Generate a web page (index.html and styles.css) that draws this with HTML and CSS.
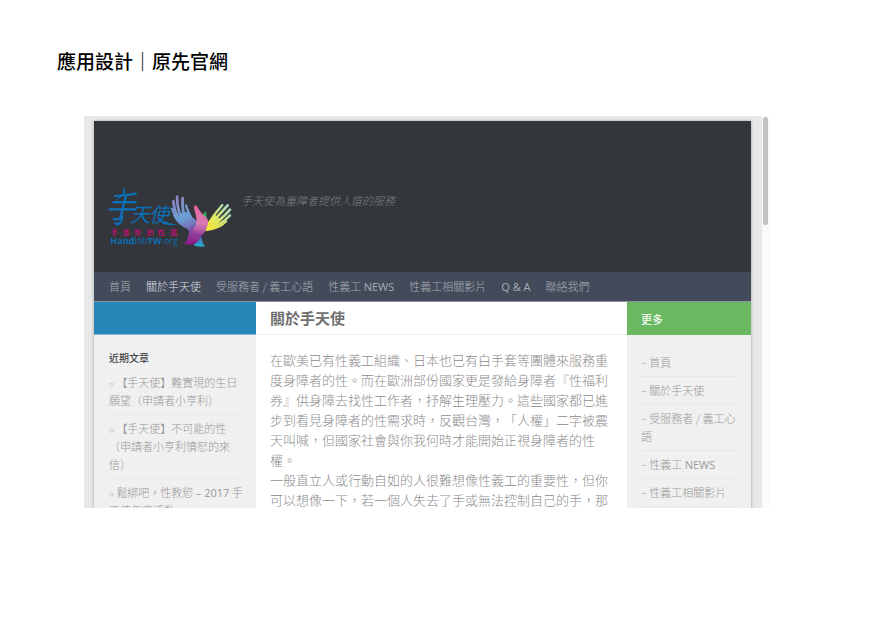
FILE: index.html
```html
<!DOCTYPE html>
<html lang="zh-Hant">
<head>
<meta charset="utf-8">
<meta name="viewport" content="width=device-width, initial-scale=1">
<title>應用設計｜原先官網</title>
<link rel="stylesheet" href="styles.css">
</head>
<body>
<h1 class="slide-title">應用設計｜原先官網</h1>
<div class="browser">
  <div class="backdrop">
    <div class="site">
      <header class="site-header">
        <a class="logo" href="#" aria-label="手天使">
          <svg class="logo-art" viewBox="87 48 366 186">
            <defs>
              <linearGradient id="wingL" gradientUnits="userSpaceOnUse" x1="290" y1="80" x2="345" y2="215">
                <stop offset="0" stop-color="#8f86c6"/><stop offset=".45" stop-color="#6a9fd4"/><stop offset=".75" stop-color="#7a62ae"/><stop offset="1" stop-color="#8c2a8c"/>
              </linearGradient>
              <linearGradient id="wingR" gradientUnits="userSpaceOnUse" x1="385" y1="165" x2="450" y2="120">
                <stop offset="0" stop-color="#f0e63c"/><stop offset=".45" stop-color="#dbe96a"/><stop offset="1" stop-color="#a5d8c4"/>
              </linearGradient>
              <linearGradient id="palm" gradientUnits="userSpaceOnUse" x1="355" y1="105" x2="345" y2="225">
                <stop offset="0" stop-color="#e8609c"/><stop offset=".45" stop-color="#d77bb2"/><stop offset=".75" stop-color="#9c3f9c"/><stop offset="1" stop-color="#86187f"/>
              </linearGradient>
              <linearGradient id="tail" x1="0" y1="0" x2="0" y2="1">
                <stop offset="0" stop-color="#5a5bb0"/><stop offset="1" stop-color="#20b4d2"/>
              </linearGradient>
            </defs>
            <g class="logo-name">
              <text class="name-big" x="76" y="144">手</text>
              <text class="name-mid" x="151" y="155">天</text>
              <text class="name-mid" x="208" y="155">使</text>
            </g>
            <path d="M128 52Q140 60 134 72Q118 86 106 92Q122 76 130 70Q132 62 128 52Z" fill="#0c6fb8"/>
            <path d="M128 130Q136 156 112 168Q104 164 100 156Q112 162 120 154Q126 146 128 130Z" fill="#0c6fb8"/>
            <path d="M232 146Q262 163 294 162Q272 169 250 162Z" fill="#0c6fb8"/>
            <text class="logo-motto" x="93 128 163 200 233 271" y="195">手護你的性福</text>
            <text class="logo-url" x="91" y="221"><tspan class="strong">Hand</tspan>Job<tspan class="strong">TW</tspan>.org</text>
            <path d="M366 134L378 124L380 145L372 158Z" fill="#35a965"/>
            <g fill="none" stroke="url(#wingR)" stroke-linecap="round">
              <path d="M382 166Q400 135 427 105" stroke-width="7"/>
              <path d="M382 170Q412 142 443 106" stroke-width="8"/>
              <path d="M382 174Q420 155 450 119" stroke-width="8"/>
              <path d="M382 178Q420 168 450 136" stroke-width="7"/>
              <path d="M380 180Q416 177 439 154" stroke-width="6"/>
            </g>
            <path d="M376 184Q380 155 405 134L424 151Q400 178 376 184Z" fill="url(#wingR)"/>
            <g fill="none" stroke="url(#wingL)" stroke-linecap="round">
              <path d="M330 165Q304 140 308 84" stroke-width="8"/>
              <path d="M322 165Q291 137 291 80" stroke-width="8"/>
              <path d="M322 168Q284 145 280 93" stroke-width="8"/>
              <path d="M325 170Q287 157 277 117" stroke-width="7"/>
              <path d="M325 174Q297 165 283 136" stroke-width="7"/>
              <path d="M346 160Q327 138 318 106" stroke-width="7"/>
            </g>
            <path d="M297 135Q304 125 320 126Q342 148 358 158L364 198L326 204Q333 184 319 174Q306 166 297 135Z" fill="url(#wingL)"/>
            <path d="M340 226Q356 213 364 197Q366 220 376 229Q357 233 340 226Z" fill="url(#tail)"/>
            <path d="M344 106Q350 105 357 119Q369 136 380 143Q386 149 383 164Q378 184 363 198Q354 220 334 225Q320 226 309 220Q322 216 325 197Q333 178 348 168Q352 146 344 122Q340 110 344 106Z" fill="url(#palm)"/>
            <path d="M344 160Q334 186 356 190Q368 192 360 201Q342 200 325 204Q322 176 344 160Z" fill="#6f329a" opacity=".35"/>
          </svg>
        </a>
        <p class="tagline">手天使為重障者提供人道的服務</p>
      </header>
      <nav class="site-nav">
        <a href="#">首頁</a>
        <a class="current" href="#">關於手天使</a>
        <a href="#">受服務者 / 義工心語</a>
        <a href="#">性義工 <span class="latin">NEWS</span></a>
        <a href="#">性義工相關影片</a>
        <a href="#"><span class="latin">Q &amp; A</span></a>
        <a href="#">聯絡我們</a>
      </nav>
      <div class="columns">
        <aside class="side">
          <div class="bar bar-blue"></div>
          <div class="side-body recent">
            <h3>近期文章</h3>
            <ul>
              <li><a href="#">【手天使】難實現的生日願望（申請者小亨利）</a></li>
              <li><a href="#">【手天使】不可能的性（申請者小亨利憤怒的來信）</a></li>
              <li><a href="#">鬆綁吧，性教慾 <span class="latin">– 2017</span> 手天使年度活動</a></li>
            </ul>
          </div>
        </aside>
        <main class="content">
          <div class="bar bar-title"><h2>關於手天使</h2></div>
          <div class="article">
            <p>在歐美已有性義工組織、日本也已有白手套等團體來服務重度身障者的性。而在歐洲部份國家更是發給身障者『性福利券』供身障去找性工作者，抒解生理壓力。這些國家都已進步到看見身障者的性需求時，反觀台灣，「人權」二字被震天叫喊，但國家社會與你我何時才能開始正視身障者的性權。</p>
            <p>一般直立人或行動自如的人很難想像性義工的重要性，但你可以想像一下，若一個人失去了手或無法控制自己的手，那</p>
          </div>
        </main>
        <aside class="side">
          <div class="bar bar-green"><h2>更多</h2></div>
          <div class="side-body more">
            <ul>
              <li><a href="#">首頁</a></li>
              <li><a href="#">關於手天使</a></li>
              <li><a href="#">受服務者 / 義工心語</a></li>
              <li><a href="#">性義工 <span class="latin">NEWS</span></a></li>
              <li><a href="#">性義工相關影片</a></li>
            </ul>
          </div>
        </aside>
      </div>
    </div>
  </div>
  <div class="track"><div class="thumb"></div></div>
</div>
</body>
</html>
```

FILE: styles.css
```css
* { box-sizing: border-box; }
h1, h2, h3, p, ul { margin: 0; padding: 0; }
ul { list-style: none; }
a { color: inherit; text-decoration: none; }

body {
  margin: 0;
  height: 100vh;
  padding: 47px 102px 117px 84px;
  display: flex;
  flex-direction: column;
  gap: 41px;
  background: #fff;
  font-family: "Noto Sans CJK TC", sans-serif;
  font-weight: 300;
  text-spacing-trim: space-all;
  overflow: hidden;
}

.slide-title {
  margin-left: -27px;
  font-size: 19px;
  line-height: 28px;
  font-weight: 500;
  color: #000;
}

.browser { flex: 1; min-height: 0; display: flex; overflow: hidden; }

.backdrop {
  flex: 1;
  min-width: 0;
  padding: 5px 11px 0 10px;
  background: #e8e8e8;
}

.site { box-shadow: 0 0 3px rgba(0, 0, 0, .3); }

.track { width: 7px; padding: 1px; background: #fafafa; }
.thumb { height: 108px; border-radius: 3px; background: #c1c1c1; }

.site-header {
  display: flex;
  gap: 10px;
  height: 151px;
  padding: 65px 15px 0;
  background: #33363b;
}
.logo { width: 122px; }
.logo-art { display: block; width: 100%; overflow: visible; }
.logo-name { fill: #0c6fb8; font-weight: 400; font-style: italic; }
.name-big { font-size: 92px; }
.name-mid { font-size: 60px; }
.logo-motto { fill: #b5106c; font-size: 20px; font-weight: 700; }
.logo-url { fill: #0c6fb8; font-family: "Open Sans", sans-serif; font-size: 27px; font-weight: 400; }
.logo-url .strong { font-weight: 700; }
.tagline {
  padding-top: 4px;
  font-size: 11px;
  line-height: 20px;
  font-style: italic;
  color: #7c7f84;
}

.site-nav {
  display: flex;
  gap: 15px;
  padding: 0 15px;
  border-bottom: 1px solid #8c929c;
  background: #434b5b;
  color: #a8acb3;
  font-size: 11px;
  line-height: 29px;
  white-space: nowrap;
}
.site-nav .current { color: #dddfe2; }
.latin { font-family: "Open Sans", sans-serif; font-weight: 400; line-height: 1; }

.columns {
  display: grid;
  grid-template-columns: 162px 1fr 124px;
  min-height: 500px;
  background: #fff;
}
.side { background: #f0f0f0; }

.bar { height: 33px; display: flex; align-items: center; padding: 0 14px; }
.bar-blue { background: #2586b7; border-bottom: 1px solid #7fb5d3; }
.bar-green { background: #6bb863; }
.bar-title { border-bottom: 1px solid #eee; }
.bar-title h2 { font-size: 15px; line-height: 20px; font-weight: 700; color: #707070; }
.bar-green h2 { font-size: 11px; line-height: 20px; font-weight: 500; color: #f4faf3; }

.article {
  padding: 15px 14px;
  font-size: 13px;
  line-height: 20px;
  color: #8c8c8c;
}

.side-body {
  padding: 14px;
  font-size: 11px;
  line-height: 18px;
  color: #999;
}
.recent { padding-left: 15px; padding-right: 12px; }
.recent h3 { margin-bottom: 2px; font-size: 10px; line-height: 18px; font-weight: 500; color: #444; }
.side-body li { padding: 4px 0 5px; border-bottom: 1px solid #e6e6e6; }
.recent li::before { content: "○ "; font-family: "DejaVu Sans", sans-serif; font-size: 8px; line-height: 1; color: #999; }
.more li::before { content: "– "; color: #999; }
```
